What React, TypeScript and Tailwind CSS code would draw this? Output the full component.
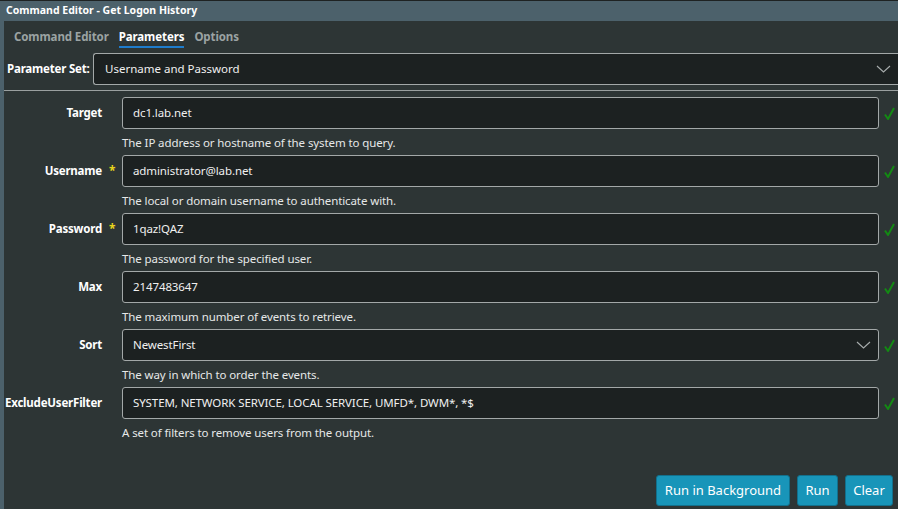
import React from "react";

const fields = [
  { label: "Target", value: "dc1.lab.net", desc: "The IP address or hostname of the system to query.", required: false, select: false },
  { label: "Username", value: "administrator@lab.net", desc: "The local or domain username to authenticate with.", required: true, select: false },
  { label: "Password", value: "1qaz!QAZ", desc: "The password for the specified user.", required: true, select: false },
  { label: "Max", value: "2147483647", desc: "The maximum number of events to retrieve.", required: false, select: false },
  { label: "Sort", value: "NewestFirst", desc: "The way in which to order the events.", required: false, select: true },
  {
    label: "ExcludeUserFilter",
    value: "SYSTEM, NETWORK SERVICE, LOCAL SERVICE, UMFD*, DWM*, *$",
    desc: "A set of filters to remove users from the output.",
    required: false,
    select: false,
  },
];

function Chevron() {
  return (
    <svg width="15" height="8" viewBox="0 0 15 8" fill="none">
      <path d="M1 1l6.5 6L14 1" stroke="#a8adad" strokeWidth="1.1" />
    </svg>
  );
}

function Check() {
  return (
    <svg width="11" height="13" viewBox="0 0 11 13" fill="none">
      <path d="M1 7.5l3 4.5L10 1" stroke="#138a13" strokeWidth="2" strokeLinejoin="round" />
    </svg>
  );
}

export default function App() {
  return (
    <div
      className="flex h-[509px] w-full flex-col overflow-hidden bg-[#2d3535] text-[#f0f0f0]"
      style={{ fontFamily: '"Noto Sans", "Open Sans", sans-serif' }}
    >
      <div className="h-px bg-[#1e2222]" />
      <div className="flex h-[20px] items-center bg-[#4c616b] pl-[6px] text-[10.5px] font-bold text-white">
        Command Editor - Get Logon History
      </div>

      <div className="flex flex-1">
        <div className="w-[4px] bg-[#4c616b]" />
        <div className="flex flex-1 flex-col">
          {/* tabs */}
          <div className="flex h-[32px] items-start gap-[10px] pl-[10px] pt-[7px] text-[11.5px] font-bold tracking-[-0.1px]">
            <span className="text-[#9ba3a3]">Command Editor</span>
            <span className="border-b-2 border-[#1f7ccc] pb-[1px] text-white">Parameters</span>
            <span className="text-[#9ba3a3]">Options</span>
          </div>

          {/* parameter set */}
          <div className="flex items-center">
            <span className="w-[89px] whitespace-nowrap pl-[3px] text-[11.5px] font-bold tracking-[-0.2px] text-white">
              Parameter Set:
            </span>
            <div className="flex h-[32px] flex-1 items-center justify-between rounded-l-[3px] border border-r-0 border-[#a3a8a8] bg-[#1c2121] pl-[11px] pr-[7px] text-[11.5px]">
              <span>Username and Password</span>
              <Chevron />
            </div>
          </div>

          <div className="mt-[5px] h-px bg-[#9aa0a0]" />

          {/* fields */}
          <div className="flex flex-col pt-[6px]">
            {fields.map((f) => (
              <div key={f.label} className="flex flex-col">
                <div className="flex items-center">
                  <span className="w-[98px] whitespace-nowrap text-right text-[11.5px] font-bold tracking-[-0.2px] text-white">
                    {f.label}
                  </span>
                  <span className="w-[20px] pl-[7px] text-[12px] font-bold leading-none text-[#e8d41c]">
                    {f.required ? "*" : ""}
                  </span>
                  <div className="flex h-[32px] w-[757px] items-center justify-between rounded-[3px] border border-[#a3a8a8] bg-[#1c2121] pl-[10px] pr-[7px] text-[11.5px] tracking-[-0.1px]">
                    <span>{f.value}</span>
                    {f.select && <Chevron />}
                  </div>
                  <span className="pl-[5px]">
                    <Check />
                  </span>
                </div>
                <div className="flex h-[26px] items-center pl-[118px] pt-[1px] text-[11.5px] tracking-[-0.1px] text-[#e6e8e8]">
                  {f.desc}
                </div>
              </div>
            ))}
          </div>

          {/* buttons */}
          <div className="mt-auto flex justify-end gap-[7px] pb-[3px] pr-[5px]">
            <button className="h-[31px] w-[134px] rounded-[3px] border border-[#12708c] bg-[#1895b9] text-[13px] text-white">
              Run in Background
            </button>
            <button className="h-[31px] w-[41px] rounded-[3px] border border-[#12708c] bg-[#1895b9] text-[13px] text-white">
              Run
            </button>
            <button className="h-[31px] w-[48px] rounded-[3px] border border-[#12708c] bg-[#1895b9] text-[13px] text-white">
              Clear
            </button>
          </div>
        </div>
      </div>
    </div>
  );
}
